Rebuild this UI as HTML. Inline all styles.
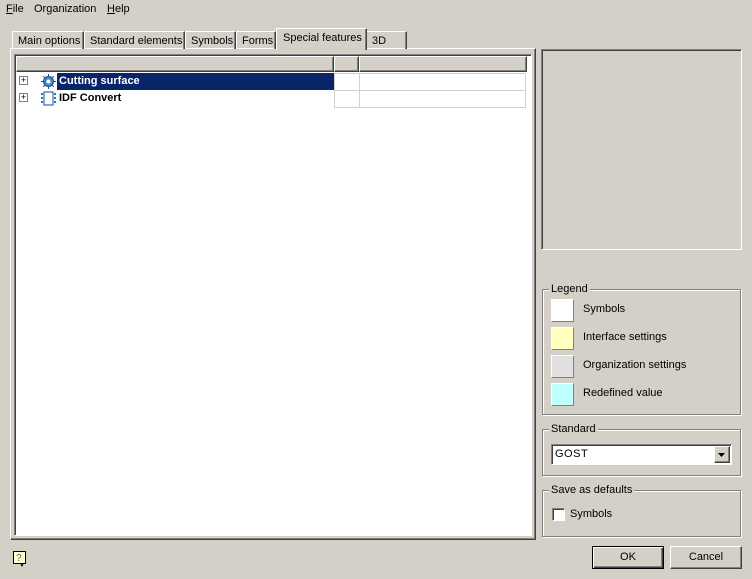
<!DOCTYPE html>
<html><head><meta charset="utf-8"><style>
*{box-sizing:border-box;margin:0;padding:0}
body{width:752px;height:579px;background:#d4d0c8;font-family:"Liberation Sans",sans-serif;font-size:11px;color:#000;position:relative;overflow:hidden}
.a{position:absolute}
.raised{border:1px solid;border-color:#fff #404040 #404040 #fff;box-shadow:inset -1px -1px 0 #808080}
.sunk{border:1px solid;border-color:#808080 #fff #fff #808080;box-shadow:inset 1px 1px 0 #404040}
.tab{position:absolute;top:31px;height:18px;border:1px solid;border-color:#fff #404040 transparent #fff;border-bottom:none;box-shadow:inset -1px 0 0 #808080;padding:3px 0 0 5px;white-space:nowrap}
.grp{position:absolute;border:1px solid #808080;box-shadow:1px 1px 0 #fff,inset 1px 1px 0 #fff}
.grp span{position:absolute;top:-7px;left:6px;background:#d4d0c8;padding:0 2px}
.sw{position:absolute;left:8px;width:23px;height:23px;border:1px solid;border-color:#fff #808080 #808080 #fff}
.lt{position:absolute;left:40px}
.btn{position:absolute;top:546px;height:23px;width:72px;text-align:center;line-height:21px}
.plus{position:absolute;left:19px;width:9px;height:9px;border:1px solid #808080;background:#fff;font-size:9px;line-height:7px;text-align:center;color:#000}
u{text-decoration:underline}
</style></head><body>
<div class="a" style="left:6px;top:3px"><u>F</u>ile</div>
<div class="a" style="left:34px;top:3px">Organization</div>
<div class="a" style="left:107px;top:3px"><u>H</u>elp</div>

<div class="a raised" style="left:10px;top:48px;width:526px;height:492px"></div>
<div class="tab" style="left:12px;width:72px">Main options</div>
<div class="tab" style="left:84px;width:101px">Standard elements</div>
<div class="tab" style="left:185px;width:51px">Symbols</div>
<div class="tab" style="left:236px;width:40px">Forms</div>
<div class="tab" style="left:366px;width:41px">3D</div>
<div class="tab" style="left:276px;top:28px;height:22px;width:91px;background:#d4d0c8;padding-top:3px;padding-left:6px;z-index:2">Special features</div>

<div class="a sunk" style="left:14px;top:54px;width:518px;height:482px;background:#fff"></div>
<div class="a" style="left:16px;top:56px;width:511px;height:16px;background:#d4d0c8"></div>
<div class="a raised" style="left:16px;top:56px;width:318px;height:16px"></div>
<div class="a raised" style="left:334px;top:56px;width:25px;height:16px"></div>
<div class="a raised" style="left:359px;top:56px;width:168px;height:16px"></div>

<div class="a" style="left:334px;top:73px;width:192px;height:35px;border:1px solid #d4d0c8"></div>
<div class="a" style="left:334px;top:90px;width:192px;height:1px;background:#d4d0c8"></div>
<div class="a" style="left:359px;top:73px;width:1px;height:35px;background:#d4d0c8"></div>

<div class="plus" style="top:76px">+</div>
<div class="plus" style="top:93px">+</div>
<svg class="a" style="left:40px;top:73px" width="17" height="17" viewBox="0 0 17 17"><g fill="#4a88c8" stroke="#1c4c8c" stroke-width="1"><circle cx="8.5" cy="8.5" r="5"/><path d="M8.5 1v3M8.5 13v3M1 8.5h3M13 8.5h3M3.2 3.2l2 2M11.8 11.8l2 2M3.2 13.8l2-2M11.8 5.2l2-2"/></g><circle cx="8.5" cy="8.5" r="2" fill="#fff"/></svg>
<div class="a" style="left:57px;top:73px;width:277px;height:17px;background:#0a246a"></div>
<div class="a" style="left:59px;top:75px;color:#fff;font-weight:bold">Cutting surface</div>
<svg class="a" style="left:40px;top:90px" width="17" height="17" viewBox="0 0 17 17"><rect x="4" y="2" width="9" height="13" fill="#fff" stroke="#1c4c8c"/><g stroke="#1c7cc8" stroke-width="2"><path d="M2 3v2M2 7v2M2 11v2M15 3v2M15 7v2M15 11v2"/></g></svg>
<div class="a" style="left:59px;top:92px;font-weight:bold">IDF Convert</div>

<div class="a sunk" style="left:541px;top:49px;width:201px;height:201px"></div>

<div class="grp" style="left:542px;top:289px;width:199px;height:126px"><span>Legend</span>
<div class="sw" style="top:9px;background:#fff"></div><div class="lt" style="top:13px">Symbols</div>
<div class="sw" style="top:37px;background:#ffffc0"></div><div class="lt" style="top:41px">Interface settings</div>
<div class="sw" style="top:65px;background:#e0e0e0"></div><div class="lt" style="top:69px">Organization settings</div>
<div class="sw" style="top:93px;background:#c0ffff"></div><div class="lt" style="top:97px">Redefined value</div>
</div>

<div class="grp" style="left:542px;top:429px;width:199px;height:47px"><span>Standard</span>
<div class="a sunk" style="left:8px;top:14px;width:181px;height:21px;background:#fff;padding:3px 0 0 3px;letter-spacing:0.5px">GOST</div>
<div class="a raised" style="left:171px;top:16px;width:16px;height:17px;background:#d4d0c8"><svg width="14" height="15"><path d="M3 6h7l-3.5 4z" fill="#000"/></svg></div>
</div>

<div class="grp" style="left:542px;top:490px;width:199px;height:47px"><span>Save as defaults</span>
<div class="a sunk" style="left:9px;top:17px;width:13px;height:13px;background:#fff"></div>
<div class="a" style="left:27px;top:17px">Symbols</div>
</div>

<div class="btn raised" style="left:592px;border-color:#000;box-shadow:inset 1px 1px 0 #fff,inset -1px -1px 0 #404040,inset -2px -2px 0 #808080">OK</div>
<div class="btn raised" style="left:670px">Cancel</div>

<svg class="a" style="left:13px;top:551px" width="14" height="16"><rect x="0.5" y="0.5" width="12" height="12" fill="#ffffd0" stroke="#000"/><path d="M8 13l1 2 1-2" fill="#ffffd0" stroke="#000"/><text x="3" y="10" font-size="10" font-family="Liberation Sans" fill="#606060">?</text></svg>
</body></html>
